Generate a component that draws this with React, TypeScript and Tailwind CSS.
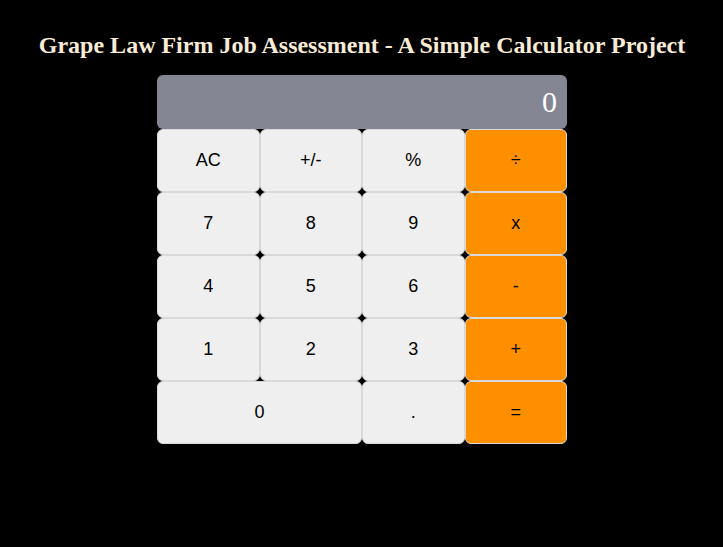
import { useState } from "react";

const KEYS = [
  "AC", "+/-", "%", "÷",
  "7", "8", "9", "x",
  "4", "5", "6", "-",
  "1", "2", "3", "+",
  "0", ".", "=",
];

const OPERATORS = ["÷", "x", "-", "+", "="];

type State = {
  display: string;
  stored: number | null;
  operator: string | null;
  fresh: boolean;
};

const INITIAL: State = { display: "0", stored: null, operator: null, fresh: true };

function compute(a: number, b: number, operator: string): number {
  if (operator === "+") return a + b;
  if (operator === "-") return a - b;
  if (operator === "x") return a * b;
  return a / b;
}

function press(state: State, key: string): State {
  const value = Number(state.display);
  if (key === "AC") return INITIAL;
  if (key === "+/-") return { ...state, display: String(-value) };
  if (key === "%") return { ...state, display: String(value / 100) };
  if (OPERATORS.includes(key)) {
    const result =
      state.operator !== null && state.stored !== null && !state.fresh
        ? compute(state.stored, value, state.operator)
        : value;
    return {
      display: String(result),
      stored: result,
      operator: key === "=" ? null : key,
      fresh: true,
    };
  }
  if (key === ".") {
    if (state.fresh) return { ...state, display: "0.", fresh: false };
    return state.display.includes(".") ? state : { ...state, display: state.display + "." };
  }
  const display = state.fresh || state.display === "0" ? key : state.display + key;
  return { ...state, display, fresh: false };
}

function Key({ name, onPress }: { name: string; onPress: (name: string) => void }) {
  const color = OPERATORS.includes(name) ? "bg-[#fe9000]" : "bg-[#efefef]";
  const span = name === "0" ? "col-span-2" : "";
  return (
    <button
      type="button"
      onClick={() => onPress(name)}
      className={`h-[63px] rounded-md border border-[#d9d9d9] text-[18px] leading-[21px] text-black ${color} ${span}`}
    >
      {name}
    </button>
  );
}

export default function App() {
  const [state, setState] = useState<State>(INITIAL);

  return (
    <main className="min-h-screen bg-black pt-[31px] pr-4 pl-[17px] font-['Liberation_Sans',Arial,sans-serif]">
      <h1 className="text-center font-['Liberation_Serif','Times_New_Roman',serif] text-2xl leading-7 font-bold text-[#faebd7]">
        Grape Law Firm Job Assessment - A Simple Calculator Project
      </h1>
      <section aria-label="Calculator" className="mx-auto mt-4 max-w-[410px]">
        <output className="flex h-[54px] items-center justify-end rounded-md bg-[#858694] px-2.5 font-['Liberation_Serif','Times_New_Roman',serif] text-3xl text-white">
          {state.display}
        </output>
        <div className="grid grid-cols-4">
          {KEYS.map((name) => (
            <Key key={name} name={name} onPress={(k) => setState((s) => press(s, k))} />
          ))}
        </div>
      </section>
    </main>
  );
}
